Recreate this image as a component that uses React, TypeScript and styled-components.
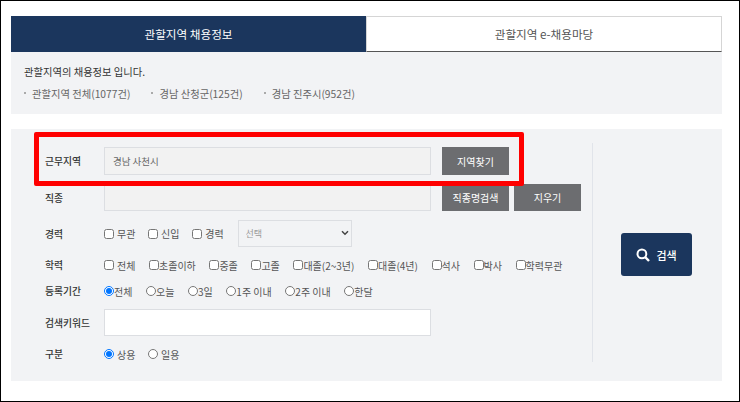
import * as React from 'react';
import styled, { createGlobalStyle } from 'styled-components';

const GlobalStyle = createGlobalStyle`
  html, body {
    margin: 0;
    padding: 0;
    background: #fff;
  }
  * {
    box-sizing: border-box;
  }
`;

const SearchIcon = () => (
  <svg width="14" height="14" viewBox="0 0 14 14" fill="none" stroke="#fff">
    <circle cx="5.9" cy="5.9" r="4.4" strokeWidth="2" />
    <path d="M9.2 9.2L13 13" strokeWidth="2.4" />
  </svg>
);

const ChevronIcon = () => (
  <Chevron width="8" height="6" viewBox="0 0 8 6" fill="none" stroke="#444">
    <path d="M1 1.2L4 4.2L7 1.2" strokeWidth="1.5" />
  </Chevron>
);

const CheckGroup = ({ items, wide }: { items: string[]; wide?: boolean }) => (
  <OptionList $gap={wide ? 12.7 : 13.6}>
    {items.map((item, i) => (
      <Option key={item} $wide={wide || i === 0}>
        <input type="checkbox" />
        {item}
      </Option>
    ))}
  </OptionList>
);

const RadioGroup = ({ name, items, wide }: { name: string; items: string[]; wide?: boolean }) => (
  <OptionList $gap={wide ? 12.7 : 13.6}>
    {items.map((item, i) => (
      <Option key={item} $wide={wide}>
        <input type="radio" name={name} defaultChecked={i === 0} />
        {item}
      </Option>
    ))}
  </OptionList>
);

export default function App() {
  return (
    <>
      <GlobalStyle />
      <Frame>
        <Tabs>
          <Tab $active>관할지역 채용정보</Tab>
          <Tab>관할지역 e-채용마당</Tab>
        </Tabs>
        <InfoPanel>
          <InfoTitle>관할지역의 채용정보 입니다.</InfoTitle>
          <InfoList>
            <InfoItem>관할지역 전체(1077건)</InfoItem>
            <InfoItem>경남 산청군(125건)</InfoItem>
            <InfoItem>경남 진주시(952건)</InfoItem>
          </InfoList>
        </InfoPanel>
        <SearchPanel>
          <Highlight />
          <FormColumn>
            <Row $height={28}>
              <Label>근무지역</Label>
              <TextField value="경남 사천시" readOnly $filled />
              <GrayButton>지역찾기</GrayButton>
            </Row>
            <Row $height={27} $top={9}>
              <Label>직종</Label>
              <TextField readOnly $filled />
              <GrayButton>직종명검색</GrayButton>
              <GrayButton $tight>지우기</GrayButton>
            </Row>
            <Row $height={27} $top={9}>
              <Label>경력</Label>
              <CheckGroup items={['무관', '신입', '경력']} wide />
              <SelectWrap>
                <SelectField defaultValue="선택">
                  <option>선택</option>
                </SelectField>
                <ChevronIcon />
              </SelectWrap>
            </Row>
            <Row $height={16} $top={10}>
              <Label>학력</Label>
              <CheckGroup
                items={['전체', '초졸이하', '중졸', '고졸', '대졸(2~3년)', '대졸(4년)', '석사', '박사', '학력무관']}
              />
            </Row>
            <Row $height={16} $top={10}>
              <Label>등록기간</Label>
              <RadioGroup name="period" items={['전체', '오늘', '3일', '1주 이내', '2주 이내', '한달']} />
            </Row>
            <Row $height={27} $top={10}>
              <Label>검색키워드</Label>
              <TextField readOnly />
            </Row>
            <Row $height={16} $top={10}>
              <Label>구분</Label>
              <RadioGroup name="kind" items={['상용', '일용']} wide />
            </Row>
          </FormColumn>
          <ActionColumn>
            <SearchButton>
              <SearchIcon />
              검색
            </SearchButton>
          </ActionColumn>
        </SearchPanel>
      </Frame>
    </>
  );
}

const fontStack = `"Noto Sans CJK KR", "Noto Sans", sans-serif`;

const Frame = styled.div`
  width: 740px;
  height: 402px;
  border: 1px solid #000;
  padding: 15px 17px 0 10px;
  font-family: ${fontStack};
  font-size: 10px;
  color: #555;
  overflow: hidden;
`;

const Tabs = styled.div`
  display: flex;
  height: 36px;
`;

const Tab = styled.div<{ $active?: boolean }>`
  width: ${(p) => (p.$active ? 355 : 356)}px;
  display: flex;
  align-items: center;
  justify-content: center;
  font-size: 11.6px;
  background: ${(p) => (p.$active ? '#1b365d' : '#fff')};
  color: ${(p) => (p.$active ? '#fff' : '#555')};
  border: 1px solid ${(p) => (p.$active ? '#1b365d' : '#d5d5d5')};
  border-bottom: 1px solid ${(p) => (p.$active ? '#1b365d' : '#555')};
`;

const InfoPanel = styled.div`
  height: 62px;
  background: #f2f3f5;
  padding: 12px 13px 0;
`;

const InfoTitle = styled.div`
  font-size: 10.3px;
  line-height: 15px;
  color: #333;
`;

const InfoList = styled.div`
  display: flex;
  gap: 21px;
  margin-top: 7px;
`;

const InfoItem = styled.div`
  font-size: 10.3px;
  line-height: 15px;
  color: #666;
  padding-left: 8px;
  position: relative;
  &::before {
    content: '';
    position: absolute;
    left: 0;
    top: 6px;
    width: 2px;
    height: 2px;
    background: #aaa;
  }
`;

const SearchPanel = styled.div`
  position: relative;
  display: flex;
  height: 252px;
  margin-top: 15px;
  background: #f2f3f5;
  padding: 14px 0 0 34px;
`;

const Highlight = styled.div`
  position: absolute;
  left: 23px;
  top: 3px;
  width: 490px;
  height: 54px;
  border: 5px solid #f00;
  border-radius: 2px;
  pointer-events: none;
`;

const FormColumn = styled.div`
  width: 548px;
  height: 219px;
  padding-top: 4px;
  border-right: 1px solid #e1e4ea;
`;

const Row = styled.div<{ $height: number; $top?: number }>`
  display: flex;
  align-items: center;
  height: ${(p) => p.$height}px;
  margin-top: ${(p) => p.$top ?? 0}px;
`;

const Label = styled.div`
  width: 59px;
  flex: none;
  font-size: 9.8px;
  font-weight: 500;
  color: #333;
`;

const TextField = styled.input<{ $filled?: boolean }>`
  width: 327px;
  height: 100%;
  padding: 0 8px;
  border: 1px solid #dcdee2;
  background: ${(p) => (p.$filled ? '#f2f2f2' : '#fff')};
  font-family: ${fontStack};
  font-size: 9.5px;
  color: #666;
  outline: none;
`;

const GrayButton = styled.button<{ $tight?: boolean }>`
  width: 67px;
  height: 100%;
  margin-left: ${(p) => (p.$tight ? 5 : 11)}px;
  border: 0;
  padding: 0;
  background: #6c6d70;
  color: #fff;
  font-family: ${fontStack};
  font-size: 10px;
`;

const OptionList = styled.div<{ $gap: number }>`
  display: flex;
  align-items: center;
  gap: ${(p) => p.$gap}px;
`;

const Option = styled.label<{ $wide?: boolean }>`
  display: flex;
  align-items: center;
  gap: ${(p) => (p.$wide ? 3 : 0)}px;
  font-size: 10px;
  color: #555;
  white-space: nowrap;
  input {
    width: 10px;
    height: 10px;
    margin: 0;
  }
`;

const SelectWrap = styled.div`
  position: relative;
  width: 114px;
  height: 100%;
  margin-left: 14px;
`;

const SelectField = styled.select`
  appearance: none;
  width: 100%;
  height: 100%;
  padding: 0 7px;
  border: 1px solid #dcdee2;
  border-radius: 0;
  background: #f2f3f5;
  font-family: ${fontStack};
  font-size: 9px;
  color: #999;
`;

const Chevron = styled.svg`
  position: absolute;
  top: 10px;
  right: 2.5px;
`;

const ActionColumn = styled.div`
  flex: 1;
  padding: 90px 0 0 28px;
`;

const SearchButton = styled.button`
  display: flex;
  align-items: center;
  justify-content: center;
  gap: 6px;
  width: 71px;
  height: 43px;
  border: 0;
  border-radius: 3px;
  background: #1b365d;
  color: #fff;
  font-family: ${fontStack};
  font-size: 11px;
  font-weight: 500;
`;
